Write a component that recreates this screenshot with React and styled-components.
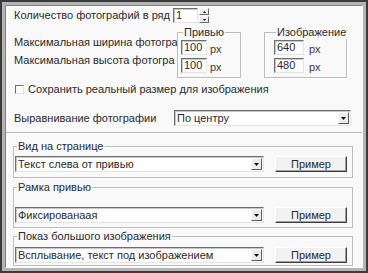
import styled, { createGlobalStyle } from "styled-components";

const GlobalStyle = createGlobalStyle`
    * { box-sizing: border-box; }
    body {
        margin: 0;
        background: #ffffff;
        font-family: "Liberation Sans", Arial, sans-serif;
        font-size: 11px;
        color: #2a2a2a;
    }
`

const Frame = styled.div`
    width: 368px;
    height: 273px;
    border: 2px solid #3c3c3c;
    background: #b4b4b4;
    padding: 3px;
    display: flex;
`

const Panel = styled.div`
    flex: 1;
    background: #f9f9f9;
    border: 1px solid;
    border-color: #808080 #ffffff #ffffff #808080;
    padding: 2px 0 0 8px;
    display: flex;
    flex-direction: column;
    overflow: hidden;
`

const Row = styled.div`
    display: flex;
    align-items: center;
    height: ${props => props.h || 16}px;
    margin-top: ${props => props.mt || 0}px;
`

const Label = styled.div`
    width: ${props => props.w || 159}px;
    white-space: nowrap;
    overflow: hidden;
    line-height: 13px;
`

const Sunken = styled.div`
    background: #ffffff;
    border: 1px solid;
    border-color: #6e6e6e #e4e4e4 #e4e4e4 #6e6e6e;
    box-shadow: inset 1px 1px 0 #c8c8c8;
    display: flex;
    align-items: center;
    padding-left: 2px;
    line-height: 13px;
    white-space: nowrap;
    overflow: hidden;
`

const TextInput = styled(Sunken)`
    width: ${props => props.w || 26}px;
    height: 15px;
`

const Spin = styled.div`
    display: flex;
    flex-direction: column;
    gap: 1px;
    margin-left: 1px;
`

const SpinBtn = styled.div`
    width: 10px;
    height: 7px;
    background: #ececec;
    border: 1px solid;
    border-color: #ffffff #6a6a6a #6a6a6a #ffffff;
    display: flex;
    align-items: center;
    justify-content: center;
`

const Block = styled.div`
    display: flex;
    margin-top: 3px;
`

const LabelStack = styled.div`
    display: flex;
    flex-direction: column;
    gap: 5px;
    padding-top: 10px;
    width: 163px;
`

const Group = styled.fieldset`
    margin: 0 ${props => props.mr || 0}px 0 0;
    padding: ${props => props.pad || "0 4px 4px 3px"};
    width: ${props => props.w}px;
    border: 1px solid #bcbcbc;
    box-shadow: 1px 1px 0 #ffffff, inset 1px 1px 0 #ffffff;
    min-width: 0;
`

const Legend = styled.legend`
    padding: 0 1px;
    margin-left: 2px;
    line-height: 13px;
    color: #2a2a2a;
`

const InputRow = styled.div`
    display: flex;
    align-items: center;
    gap: ${props => props.gap || 3}px;
    margin-top: ${props => props.mt || 0}px;
`

const Unit = styled.span`
    color: #3a3a3a;
    padding-top: 2px;
`

const CheckBox = styled.div`
    width: 9px;
    height: 9px;
    background: #ffffff;
    border: 1px solid;
    border-color: #6e6e6e #e4e4e4 #e4e4e4 #6e6e6e;
    margin: 0 4px 0 1px;
`

const Select = styled(Sunken)`
    width: ${props => props.w}px;
    height: 16px;
    padding: 0 0 0 2px;
    justify-content: space-between;
`

const Arrow = styled.div`
    width: 11px;
    height: 12px;
    margin-right: 1px;
    background: #ececec;
    border: 1px solid;
    border-color: #ffffff #5a5a5a #5a5a5a #ffffff;
    display: flex;
    align-items: center;
    justify-content: center;
`

const Separator = styled.div`
    height: 2px;
    margin: 6px 0 0 -8px;
    border-top: 1px solid #b8b8b8;
    border-bottom: 1px solid #ffffff;
`

const GroupRow = styled.div`
    display: flex;
    align-items: center;
    justify-content: space-between;
    padding-right: 5px;
    margin-top: ${props => props.mt || 0}px;
`

const Button = styled.div`
    width: 72px;
    height: 16px;
    background: #f2f2f2;
    border: 1px solid;
    border-color: #ffffff #3c3c3c #3c3c3c #ffffff;
    box-shadow: inset -1px -1px 0 #a0a0a0;
    display: flex;
    align-items: center;
    justify-content: center;
    line-height: 13px;
`

const Stack = styled.div`
    display: flex;
    flex-direction: column;
    margin: 6px 0 0 -1px;
`

const Spacer = styled.div`
    height: ${props => props.h}px;
`

function DownArrow() {
    return (
        <svg width="5" height="3" viewBox="0 0 5 3">
            <path d="M0 0h5L2.5 3z" fill="#111" />
        </svg>
    )
}

function UpArrow() {
    return (
        <svg width="3" height="2" viewBox="0 0 3 2">
            <path d="M0 2h3L1.5 0z" fill="#111" />
        </svg>
    )
}

function SmallDown() {
    return (
        <svg width="3" height="2" viewBox="0 0 3 2">
            <path d="M0 0h3L1.5 2z" fill="#111" />
        </svg>
    )
}

function Combo({ w, children }) {
    return (
        <Select w={w}>
            <span>{children}</span>
            <Arrow><DownArrow /></Arrow>
        </Select>
    )
}

function ExampleGroup({ title, value, mt, pad }) {
    return (
        <Group w={340} pad={`0 0 ${pad}px 1px`}>
            <Legend>{title}</Legend>
            <GroupRow mt={mt}>
                <Combo w={249}>{value}</Combo>
                <Button>Пример</Button>
            </GroupRow>
        </Group>
    )
}

export default function App() {
    return (
        <>
            <GlobalStyle />
            <Frame>
                <Panel>
                    <Row h={15}>
                        <Label w={159}>Количество фотографий в ряд</Label>
                        <TextInput w={25}>1</TextInput>
                        <Spin>
                            <SpinBtn><UpArrow /></SpinBtn>
                            <SpinBtn><SmallDown /></SpinBtn>
                        </Spin>
                    </Row>
                    <Block>
                        <LabelStack>
                            <Label w={163}>Максимальная ширина фотогра</Label>
                            <Label w={163}>Максимальная высота фотогра</Label>
                        </LabelStack>
                        <Group w={64} mr={23}>
                            <Legend>Привью</Legend>
                            <InputRow mt={1}>
                                <TextInput w={26}>100</TextInput>
                                <Unit>px</Unit>
                            </InputRow>
                            <InputRow mt={3}>
                                <TextInput w={26}>100</TextInput>
                                <Unit>px</Unit>
                            </InputRow>
                        </Group>
                        <Group w={83} pad="0 4px 4px 9px">
                            <Legend>Изображение</Legend>
                            <InputRow mt={1} gap={5}>
                                <TextInput w={30}>640</TextInput>
                                <Unit>px</Unit>
                            </InputRow>
                            <InputRow mt={3} gap={5}>
                                <TextInput w={30}>480</TextInput>
                                <Unit>px</Unit>
                            </InputRow>
                        </Group>
                    </Block>
                    <Row h={13} mt={5}>
                        <CheckBox />
                        <Label w={320}>Сохранить реальный размер для изображения</Label>
                    </Row>
                    <Row h={16} mt={14}>
                        <Label w={160}>Выравнивание фотографии</Label>
                        <Combo w={177}>По центру</Combo>
                    </Row>
                    <Separator />
                    <Stack>
                        <ExampleGroup title="Вид на странице" value="Текст слева от привью" mt={3} pad={5} />
                        <Spacer h={3} />
                        <ExampleGroup title="Рамка привью" value="Фиксированаая" mt={13} pad={4} />
                        <Spacer h={2} />
                        <ExampleGroup title="Показ большого изображения" value="Всплывание, текст под изображением" mt={4} pad={2} />
                    </Stack>
                </Panel>
            </Frame>
        </>
    )
}
